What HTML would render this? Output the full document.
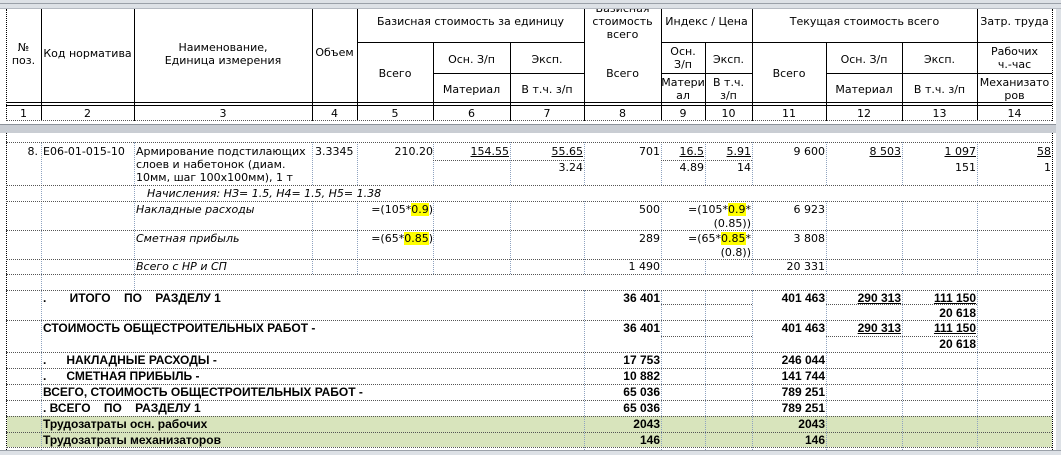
<!DOCTYPE html>
<html><head><meta charset="utf-8"><style>
body{margin:0;width:1061px;height:455px;overflow:hidden;background:#fff;position:relative;font-family:"DejaVu Sans",Tahoma,sans-serif;font-size:11px;color:#000}
div{position:absolute}
.t{white-space:nowrap;line-height:13px}
.c{text-align:center}
.b{font-weight:bold;font-family:"Liberation Sans",Arial,sans-serif;font-size:12px}
.i{font-style:italic}
.vb{width:1px;background:#000}
.hb{height:1px;background:#000}
.vd{width:0;border-left:1px dotted #8fa3c0}
.hd{height:0;border-top:1px dotted #555}
.u{text-decoration:underline}
.y{background:#ffff00}
</style></head><body>
<!-- gray bars -->
<div style="left:0;top:0;width:1061px;height:9px;background:#dde1e6"></div>
<div style="left:0;top:3px;width:1061px;height:1px;background:#9aa0a8"></div>
<div style="left:0;top:8px;width:1061px;height:1px;background:#b5bac2"></div>
<div style="left:0;top:124px;width:1061px;height:9px;background:#c9cdd3"></div>
<div style="left:0;top:124px;width:1061px;height:1px;background:#8c929a"></div>
<div style="left:0;top:450px;width:1061px;height:5px;background:#dde1e6"></div>
<div style="left:0;top:450px;width:1061px;height:1px;background:#9aa0a8"></div>
<div style="left:1056px;top:9px;width:5px;height:441px;background:#dde1e6"></div>

<!-- green -->
<div style="left:7px;top:416px;width:1045px;height:31px;background:#d8e4bc"></div>

<!-- header lines -->
<div class="vb" style="left:41px;top:9px;height:112px"></div>
<div class="vb" style="left:134px;top:9px;height:112px"></div>
<div class="vb" style="left:312px;top:9px;height:112px"></div>
<div class="vb" style="left:357px;top:9px;height:112px"></div>
<div class="vb" style="left:433px;top:42px;height:79px"></div>
<div class="vb" style="left:510px;top:42px;height:79px"></div>
<div class="vb" style="left:584px;top:9px;height:112px"></div>
<div class="vb" style="left:661px;top:9px;height:112px"></div>
<div class="vb" style="left:705px;top:42px;height:79px"></div>
<div class="vb" style="left:752px;top:9px;height:112px"></div>
<div class="vb" style="left:826px;top:42px;height:79px"></div>
<div class="vb" style="left:902px;top:42px;height:79px"></div>
<div class="vb" style="left:977px;top:9px;height:112px"></div>
<div class="vd" style="left:6px;top:9px;height:112px;border-left:1px dotted #000"></div>
<div class="vd" style="left:1052px;top:9px;height:112px;border-left:1px dotted #000"></div>
<div class="hb" style="left:357px;top:42px;width:227px"></div>
<div class="hb" style="left:661px;top:42px;width:391px"></div>
<div class="hb" style="left:433px;top:73px;width:151px"></div>
<div class="hb" style="left:661px;top:73px;width:91px"></div>
<div class="hb" style="left:826px;top:73px;width:226px"></div>
<div class="hb" style="left:6px;top:102px;width:1046px"></div>
<div class="hb" style="left:6px;top:105px;width:1046px"></div>
<div class="hd" style="left:6px;top:120px;width:1046px"></div>

<!-- header text -->
<div class="t c" style="left:6px;width:35px;top:41px">№<br>поз.</div>
<div class="t c" style="left:41px;width:93px;top:47px">Код норматива</div>
<div class="t c" style="left:134px;width:178px;top:41px">Наименование,<br>Единица измерения</div>
<div class="t c" style="left:312px;width:45px;top:46px">Объем</div>
<div class="t c" style="left:357px;width:227px;top:15px">Базисная стоимость за единицу</div>
<div class="t c" style="left:357px;width:76px;top:67px">Всего</div>
<div class="t c" style="left:433px;width:77px;top:53px">Осн. З/п</div>
<div class="t c" style="left:510px;width:74px;top:53px">Эксп.</div>
<div class="t c" style="left:433px;width:77px;top:83px">Материал</div>
<div class="t c" style="left:510px;width:74px;top:83px">В т.ч. з/п</div>
<div class="t c" style="left:584px;width:77px;top:9px;overflow:hidden;height:32px"><div class="t c" style="position:relative;top:-7px;width:77px">Базисная<br>стоимость<br>всего</div></div>
<div class="t c" style="left:584px;width:77px;top:67px">Всего</div>
<div class="t c" style="left:661px;width:91px;top:15px">Индекс / Цена</div>
<div class="t c" style="left:661px;width:44px;top:45px">Осн.<br>З/п</div>
<div class="t c" style="left:705px;width:47px;top:53px">Эксп.</div>
<div class="t c" style="left:661px;width:44px;top:76px;overflow:hidden">Матери<br>ал</div>
<div class="t c" style="left:705px;width:47px;top:76px">В т.ч.<br>з/п</div>
<div class="t c" style="left:752px;width:225px;top:15px">Текущая стоимость всего</div>
<div class="t c" style="left:752px;width:74px;top:67px">Всего</div>
<div class="t c" style="left:826px;width:76px;top:53px">Осн. З/п</div>
<div class="t c" style="left:902px;width:75px;top:53px">Эксп.</div>
<div class="t c" style="left:826px;width:76px;top:83px">Материал</div>
<div class="t c" style="left:902px;width:75px;top:83px">В т.ч. з/п</div>
<div class="t c" style="left:977px;width:75px;top:15px">Затр. труда</div>
<div class="t c" style="left:977px;width:75px;top:45px">Рабочих<br>ч.-час</div>
<div class="t c" style="left:977px;width:75px;top:76px">Механизато<br>ров</div>
<!-- number row -->
<div class="t c" style="left:6px;width:35px;top:107px">1</div>
<div class="t c" style="left:41px;width:93px;top:107px">2</div>
<div class="t c" style="left:134px;width:178px;top:107px">3</div>
<div class="t c" style="left:312px;width:45px;top:107px">4</div>
<div class="t c" style="left:357px;width:76px;top:107px">5</div>
<div class="t c" style="left:433px;width:77px;top:107px">6</div>
<div class="t c" style="left:510px;width:74px;top:107px">7</div>
<div class="t c" style="left:584px;width:77px;top:107px">8</div>
<div class="t c" style="left:661px;width:44px;top:107px">9</div>
<div class="t c" style="left:705px;width:47px;top:107px">10</div>
<div class="t c" style="left:752px;width:74px;top:107px">11</div>
<div class="t c" style="left:826px;width:76px;top:107px">12</div>
<div class="t c" style="left:902px;width:75px;top:107px">13</div>
<div class="t c" style="left:977px;width:75px;top:107px">14</div>

<!-- data grid -->
<div class="vd" style="left:6px;top:133px;height:317px;border-left:1px dotted #000"></div>
<div class="vd" style="left:1052px;top:133px;height:317px;border-left:1px dotted #000"></div>
<div class="vd" style="left:41px;top:142px;height:308px"></div>
<div class="vd" style="left:134px;top:142px;height:148px"></div>
<div class="vd" style="left:312px;top:142px;height:43px"></div>
<div class="vd" style="left:312px;top:201px;height:73px"></div>
<div class="vd" style="left:357px;top:142px;height:43px"></div>
<div class="vd" style="left:357px;top:201px;height:73px"></div>
<div class="vd" style="left:433px;top:142px;height:43px"></div>
<div class="vd" style="left:433px;top:201px;height:73px"></div>
<div class="vd" style="left:510px;top:142px;height:43px"></div>
<div class="vd" style="left:510px;top:201px;height:73px"></div>
<div class="vd" style="left:584px;top:142px;height:43px"></div>
<div class="vd" style="left:584px;top:201px;height:73px"></div>
<div class="vd" style="left:584px;top:290px;height:160px"></div>
<div class="vd" style="left:661px;top:142px;height:43px"></div>
<div class="vd" style="left:661px;top:201px;height:73px"></div>
<div class="vd" style="left:661px;top:290px;height:160px"></div>
<div class="vd" style="left:705px;top:142px;height:43px"></div>
<div class="vd" style="left:705px;top:259px;height:15px"></div>
<div class="vd" style="left:705px;top:290px;height:160px"></div>
<div class="vd" style="left:752px;top:142px;height:43px"></div>
<div class="vd" style="left:752px;top:201px;height:73px"></div>
<div class="vd" style="left:752px;top:290px;height:160px"></div>
<div class="vd" style="left:826px;top:142px;height:43px"></div>
<div class="vd" style="left:826px;top:201px;height:73px"></div>
<div class="vd" style="left:826px;top:290px;height:160px"></div>
<div class="vd" style="left:902px;top:142px;height:43px"></div>
<div class="vd" style="left:902px;top:201px;height:73px"></div>
<div class="vd" style="left:902px;top:290px;height:160px"></div>
<div class="vd" style="left:977px;top:142px;height:43px"></div>
<div class="vd" style="left:977px;top:201px;height:73px"></div>
<div class="vd" style="left:977px;top:290px;height:160px"></div>

<div class="hd" style="left:6px;top:142px;width:1046px"></div>
<div class="hd" style="left:433px;top:160px;width:151px"></div>
<div class="hd" style="left:661px;top:160px;width:91px"></div>
<div class="hd" style="left:6px;top:185px;width:1046px"></div>
<div class="hd" style="left:6px;top:201px;width:1046px"></div>
<div class="hd" style="left:6px;top:230px;width:1046px"></div>
<div class="hd" style="left:6px;top:259px;width:1046px"></div>
<div class="hd" style="left:6px;top:274px;width:1046px"></div>
<div class="hd" style="left:6px;top:290px;width:1046px"></div>
<div class="hd" style="left:661px;top:304px;width:91px"></div>
<div class="hd" style="left:826px;top:304px;width:151px"></div>
<div class="hd" style="left:6px;top:320px;width:1046px"></div>
<div class="hd" style="left:661px;top:336px;width:91px"></div>
<div class="hd" style="left:826px;top:336px;width:151px"></div>
<div class="hd" style="left:6px;top:352px;width:1046px"></div>
<div class="hd" style="left:6px;top:368px;width:1046px"></div>
<div class="hd" style="left:6px;top:384px;width:1046px"></div>
<div class="hd" style="left:6px;top:400px;width:1046px"></div>
<div class="hd" style="left:6px;top:416px;width:1046px"></div>
<div class="hd" style="left:6px;top:432px;width:1046px"></div>
<div class="hd" style="left:6px;top:447px;width:1046px"></div>

<!-- row 8 -->
<div class="t" style="right:1023px;top:145px">8.</div>
<div class="t" style="left:43px;top:145px">E06-01-015-10</div>
<div class="t" style="left:136px;top:145px">Армирование подстилающих<br>слоев и набетонок (диам.<br>10мм, шаг 100х100мм), 1 т</div>
<div class="t" style="left:315px;top:145px">3.3345</div>
<div class="t" style="right:628px;top:145px">210.20</div>
<div class="t u" style="right:552px;top:145px">154.55</div>
<div class="t u" style="right:478px;top:145px">55.65</div>
<div class="t" style="right:478px;top:161px">3.24</div>
<div class="t" style="right:401px;top:145px">701</div>
<div class="t u" style="right:357px;top:145px">16.5</div>
<div class="t u" style="right:310px;top:145px">5.91</div>
<div class="t" style="right:357px;top:161px">4.89</div>
<div class="t" style="right:310px;top:161px">14</div>
<div class="t" style="right:236px;top:145px">9 600</div>
<div class="t u" style="right:160px;top:145px">8 503</div>
<div class="t u" style="right:85px;top:145px">1 097</div>
<div class="t" style="right:85px;top:161px">151</div>
<div class="t u" style="right:10px;top:145px">58</div>
<div class="t" style="right:10px;top:161px">1</div>
<div class="t i" style="left:147px;top:187px">Начисления: НЗ= 1.5, Н4= 1.5, Н5= 1.38</div>

<div class="t i" style="left:136px;top:203px">Накладные расходы</div>
<div class="t" style="right:628px;top:203px">=(105*<span class="y">0.9</span>)</div>
<div class="t" style="right:401px;top:203px">500</div>
<div class="t" style="right:310px;top:203px">=(105*<span class="y">0.9</span>*</div>
<div class="t" style="right:310px;top:217px">(0.85))</div>
<div class="t" style="right:236px;top:203px">6 923</div>

<div class="t i" style="left:136px;top:232px">Сметная прибыль</div>
<div class="t" style="right:628px;top:232px">=(65*<span class="y">0.85</span>)</div>
<div class="t" style="right:401px;top:232px">289</div>
<div class="t" style="right:310px;top:232px">=(65*<span class="y">0.85</span>*</div>
<div class="t" style="right:310px;top:246px">(0.8))</div>
<div class="t" style="right:236px;top:232px">3 808</div>

<div class="t i" style="left:136px;top:260px">Всего с НР и СП</div>
<div class="t" style="right:401px;top:260px">1 490</div>
<div class="t" style="right:236px;top:260px">20 331</div>

<!-- summary -->
<div class="t b" style="left:43px;top:292px">.&nbsp;&nbsp;&nbsp;&nbsp;&nbsp;&nbsp;&nbsp;ИТОГО&nbsp;&nbsp;&nbsp;&nbsp;ПО&nbsp;&nbsp;&nbsp;&nbsp;РАЗДЕЛУ 1</div>
<div class="t b" style="right:401px;top:292px">36 401</div>
<div class="t b" style="right:236px;top:292px">401 463</div>
<div class="t b u" style="right:160px;top:292px">290 313</div>
<div class="t b u" style="right:85px;top:292px">111 150</div>
<div class="t b" style="right:85px;top:307px">20 618</div>

<div class="t b" style="left:43px;top:322px">СТОИМОСТЬ ОБЩЕСТРОИТЕЛЬНЫХ РАБОТ -</div>
<div class="t b" style="right:401px;top:322px">36 401</div>
<div class="t b" style="right:236px;top:322px">401 463</div>
<div class="t b u" style="right:160px;top:322px">290 313</div>
<div class="t b u" style="right:85px;top:322px">111 150</div>
<div class="t b" style="right:85px;top:338px">20 618</div>

<div class="t b" style="left:43px;top:354px">.&nbsp;&nbsp;&nbsp;&nbsp;&nbsp;&nbsp;НАКЛАДНЫЕ РАСХОДЫ -</div>
<div class="t b" style="right:401px;top:354px">17 753</div>
<div class="t b" style="right:236px;top:354px">246 044</div>
<div class="t b" style="left:43px;top:370px">.&nbsp;&nbsp;&nbsp;&nbsp;&nbsp;&nbsp;СМЕТНАЯ ПРИБЫЛЬ -</div>
<div class="t b" style="right:401px;top:370px">10 882</div>
<div class="t b" style="right:236px;top:370px">141 744</div>
<div class="t b" style="left:43px;top:386px">ВСЕГО, СТОИМОСТЬ ОБЩЕСТРОИТЕЛЬНЫХ РАБОТ -</div>
<div class="t b" style="right:401px;top:386px">65 036</div>
<div class="t b" style="right:236px;top:386px">789 251</div>
<div class="t b" style="left:43px;top:402px">. ВСЕГО&nbsp;&nbsp;&nbsp;&nbsp;ПО&nbsp;&nbsp;&nbsp;&nbsp;РАЗДЕЛУ 1</div>
<div class="t b" style="right:401px;top:402px">65 036</div>
<div class="t b" style="right:236px;top:402px">789 251</div>
<div class="t b" style="left:43px;top:418px">Трудозатраты осн. рабочих</div>
<div class="t b" style="right:401px;top:418px">2043</div>
<div class="t b" style="right:236px;top:418px">2043</div>
<div class="t b" style="left:43px;top:434px">Трудозатраты механизаторов</div>
<div class="t b" style="right:401px;top:434px">146</div>
<div class="t b" style="right:236px;top:434px">146</div>
</body></html>
